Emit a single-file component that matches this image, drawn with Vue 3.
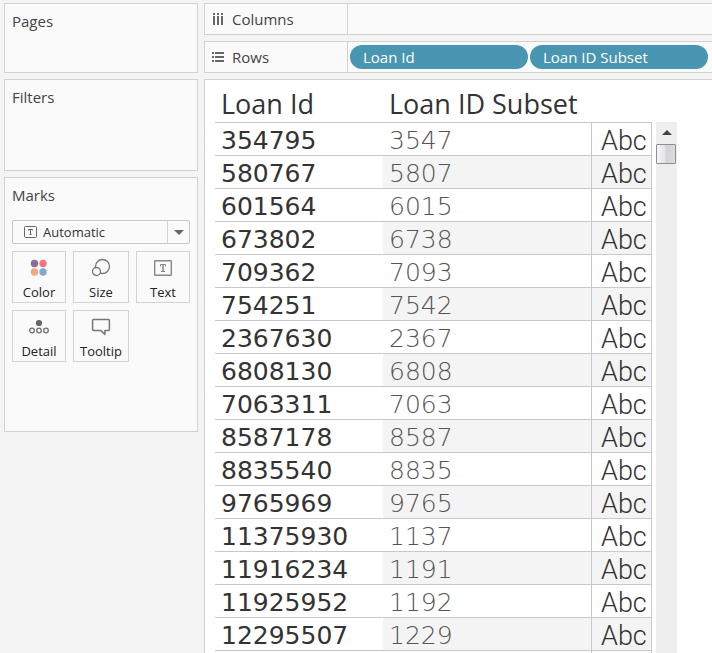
<script setup>
import { ref } from 'vue'

const markType = ref('Automatic')
const fields = ['Loan Id', 'Loan ID Subset']
const loanIds = [
  '354795', '580767', '601564', '673802', '709362', '754251', '2367630', '6808130',
  '7063311', '8587178', '8835540', '9765969', '11375930', '11916234', '11925952', '12295507',
]
const rows = loanIds.map((id) => ({ id, subset: id.slice(0, 4) }))
</script>

<template>
  <div class="workspace">
    <aside class="side">
      <section class="card pages"><h2>Pages</h2></section>
      <section class="card filters"><h2>Filters</h2></section>
      <section class="card marks">
        <h2>Marks</h2>
        <div class="picker">
          <svg class="picker-icon" width="13" height="12" viewBox="0 0 13 12" fill="none" stroke="#666" aria-hidden="true">
            <rect x=".5" y=".5" width="12" height="11" rx="1" />
            <path d="M4.5 4.5V3.5h4v1M6.5 3.5v5M5.5 8.5h2" />
          </svg>
          <select v-model="markType" aria-label="Mark type">
            <option>Automatic</option>
          </select>
          <span class="picker-arrow" aria-hidden="true"></span>
        </div>
        <div class="mark-grid">
          <button type="button">
            <svg width="20" height="20" viewBox="0 0 20 20" aria-hidden="true">
              <circle cx="5.5" cy="5.5" r="3.7" fill="#866f98" />
              <circle cx="14" cy="5.5" r="3.7" fill="#fa7183" />
              <circle cx="5.5" cy="14" r="3.7" fill="#f2a87e" />
              <circle cx="14" cy="14" r="3.7" fill="#84a7cd" />
            </svg>
            Color
          </button>
          <button type="button">
            <svg width="20" height="20" viewBox="0 0 20 20" fill="none" stroke="#777" stroke-width="1.3" aria-hidden="true">
              <circle cx="11.5" cy="8.5" r="7" />
              <circle cx="5.5" cy="13.5" r="4" fill="#fafafa" />
            </svg>
            Size
          </button>
          <button type="button">
            <svg width="20" height="20" viewBox="0 0 20 20" fill="none" stroke="#888" aria-hidden="true">
              <rect x="1.7" y="2.7" width="16.6" height="14.6" rx=".5" stroke-width="1.4" />
              <path d="M7.5 8.5v-2h5v2M8 13.5h4" />
              <path d="M10 6.5v7" stroke-width="1.5" />
            </svg>
            Text
          </button>
          <button type="button">
            <svg width="20" height="20" viewBox="0 0 20 20" fill="none" stroke="#707070" stroke-width="1.3" aria-hidden="true">
              <circle cx="10" cy="6" r="3.1" fill="#666" stroke="none" />
              <circle cx="3" cy="13.5" r="2.3" />
              <circle cx="10" cy="13.5" r="2.3" />
              <circle cx="17" cy="13.5" r="2.3" />
            </svg>
            Detail
          </button>
          <button type="button">
            <svg width="20" height="20" viewBox="0 0 20 20" fill="none" stroke="#777" stroke-width="1.5" stroke-linejoin="round" aria-hidden="true">
              <path d="M2.500 2.600h15q.9 0 .9.9v9q0 .9-.9.9h-3.600v4L9.500 13.400H2.500q-.9 0-.9-.9v-9q0-.9.900-.9z" />
            </svg>
            Tooltip
          </button>
        </div>
      </section>
    </aside>

    <main class="main">
      <section class="shelf">
        <h2>
          <svg width="12" height="12" viewBox="0 0 12 12" fill="#666" aria-hidden="true">
            <path d="M1 0h2v2H1zM5 0h2v2H5zM9 0h2v2H9zM1 3h2v9H1zM5 3h2v9H5zM9 3h2v9H9z" />
          </svg>
          Columns
        </h2>
        <div class="drop"></div>
      </section>
      <section class="shelf">
        <h2>
          <svg width="12" height="12" viewBox="0 0 12 12" fill="#666" aria-hidden="true">
            <path d="M0 1h2v2H0zM3 1h9v2H3zM0 5h2v2H0zM3 5h9v2H3zM0 9h2v2H0zM3 9h9v2H3z" />
          </svg>
          Rows
        </h2>
        <div class="drop">
          <button v-for="f in fields" :key="f" type="button" class="pill">{{ f }}</button>
        </div>
      </section>
      <section class="view">
        <table>
          <thead>
            <tr>
              <th scope="col" class="c-id">Loan Id</th>
              <th scope="col" class="c-sub">Loan ID Subset</th>
              <td class="c-abc"></td>
            </tr>
          </thead>
          <tbody>
            <tr v-for="r in rows" :key="r.id">
              <th scope="row">{{ r.id }}</th>
              <td class="subset">{{ r.subset }}</td>
              <td class="abc">Abc</td>
            </tr>
            <tr>
              <th></th>
              <td class="subset"></td>
              <td class="abc"></td>
            </tr>
          </tbody>
        </table>
        <div class="scrollbar">
          <button type="button" class="up" aria-label="Scroll up">
            <svg width="10" height="6" viewBox="0 0 10 6" aria-hidden="true"><path d="M5 0l5 5H0z" fill="#444" /></svg>
          </button>
          <div class="thumb"></div>
        </div>
      </section>
    </main>
  </div>
</template>

<style>
body {
  margin: 0;
  background: #f4f4f4;
}
</style>

<style scoped>
* {
  box-sizing: border-box;
}
.workspace {
  display: grid;
  grid-template-columns: 194px minmax(0, 1fr);
  gap: 6px;
  height: 100vh;
  padding: 3px 0 0 4px;
  overflow: hidden;
  font-family: "Open Sans", "Noto Sans", sans-serif;
  font-size: 15px;
  color: #333;
}
h2 {
  margin: 0;
  font-size: 15px;
  font-weight: 400;
  line-height: 20px;
  color: #444;
}
button,
select {
  font-family: inherit;
  color: inherit;
}
svg {
  display: block;
}
.side,
.main {
  display: flex;
  flex-direction: column;
  gap: 6px;
  min-height: 0;
}
.card {
  padding: 7px;
  border: 1px solid #d2d2d2;
  background: #fafafa;
}
.pages {
  min-height: 70px;
}
.filters {
  min-height: 92px;
}
.marks {
  min-height: 255px;
}
.picker {
  position: relative;
  height: 24px;
  margin-top: 15px;
}
.picker select {
  appearance: none;
  width: 100%;
  height: 24px;
  padding: 0 30px;
  border: 1px solid #c8c8c8;
  border-radius: 2px;
  background: #fafafa;
  font-size: 13px;
}
.picker-icon {
  position: absolute;
  left: 12px;
  top: 6px;
}
.picker-arrow {
  position: absolute;
  right: 1px;
  top: 1px;
  display: grid;
  place-items: center;
  width: 22px;
  height: 22px;
  border-left: 1px solid #d2d2d2;
  pointer-events: none;
}
.picker-arrow::before {
  content: "";
  border: 5px solid transparent;
  border-top-color: #666;
  border-bottom: 0;
}
.mark-grid {
  display: grid;
  grid-template-columns: 54fr 56fr 54fr;
  gap: 7px;
  margin-top: 7px;
}
.mark-grid button {
  display: flex;
  flex-direction: column;
  align-items: center;
  gap: 6px;
  height: 52px;
  padding: 6px 0 0;
  border: 1px solid #d2d2d2;
  background: #fafafa;
  font-size: 13px;
  line-height: 16px;
  color: #222;
}
.shelf {
  display: flex;
  height: 32px;
  flex: none;
  border: 1px solid #d2d2d2;
  border-right: 0;
  background: #fafafa;
}
.shelf h2 {
  display: flex;
  align-items: center;
  gap: 8px;
  width: 143px;
  padding-left: 7px;
  border-right: 1px solid #d2d2d2;
}
.drop {
  display: flex;
  flex: 1;
  align-items: center;
  gap: 2px;
  padding: 0 4px 0 2px;
}
.pill {
  flex: 1;
  height: 24px;
  padding: 0 13px;
  border: 0;
  border-radius: 12px;
  background: #4996b2;
  color: #fff;
  font-size: 15px;
  line-height: 24px;
  text-align: left;
}
.view {
  display: flex;
  flex: 1;
  align-items: stretch;
  gap: 4px;
  min-height: 0;
  padding: 8px 0 0 10px;
  border: 1px solid #d2d2d2;
  border-width: 1px 0 0 1px;
  background: #fff;
  overflow: hidden;
}
table {
  flex: none;
  align-self: flex-start;
  width: 437px;
  border-collapse: separate;
  border-spacing: 0;
  table-layout: fixed;
  font-family: "DejaVu Sans", sans-serif;
  font-size: 25px;
}
th,
td {
  height: 33px;
  padding: 3px 0 0 6px;
  border-bottom: 1px solid #c8c8c8;
  line-height: 29px;
  text-align: left;
  white-space: nowrap;
}
thead th {
  padding: 0 0 2px 6px;
  font-family: "Open Sans", "Noto Sans", sans-serif;
  font-size: 27px;
  font-weight: 400;
  line-height: 32px;
}
.c-id {
  width: 168px;
}
.c-sub {
  width: 209px;
}
.c-abc {
  width: 60px;
}
tbody th {
  font-weight: 400;
}
.subset {
  border-right: 1px solid #c8c8c8;
  font-weight: 200;
  color: #555;
}
.abc {
  padding: 4px 0 0 9px;
  border-right: 1px solid #c8c8c8;
  font-family: Roboto, sans-serif;
  font-size: 27px;
  font-weight: 300;
  line-height: 28px;
}
tbody tr:nth-child(even) td {
  background: #f4f4f4;
}
.scrollbar {
  display: flex;
  flex-direction: column;
  width: 21px;
  margin-top: 34px;
  background: #eee;
}
.up {
  display: grid;
  place-items: center;
  width: 100%;
  height: 22px;
  padding: 0;
  border: 0;
  background: transparent;
}
.thumb {
  width: 20px;
  height: 20px;
  border: 1px solid #8f8f8f;
  border-radius: 1px;
  background: linear-gradient(90deg, #f4f4f4, #e4e4e6 45%, #d2d3d6 50%, #dcdcde);
}
</style>
